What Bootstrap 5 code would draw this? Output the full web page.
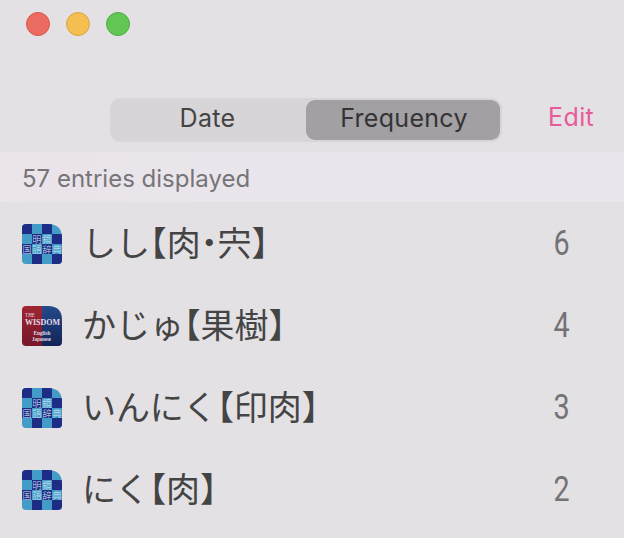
<!DOCTYPE html>
<html lang="ja">
<head>
<meta charset="utf-8">
<meta name="viewport" content="width=device-width, initial-scale=1">
<title>History</title>
<link href="https://cdn.jsdelivr.net/npm/bootstrap@5.3.0/dist/css/bootstrap.min.css" rel="stylesheet">
<style>
body{background:#e3e1e4;font-family:Inter,"Noto Sans CJK JP",sans-serif;height:538px;color:#444;overflow:hidden}
.titlebar{height:98px;padding:12px 0 0 26px;gap:16px}
.dot{width:24px;height:24px;border:1px solid}
.dot-r{background:#ec6b60;border-color:#d9574c}
.dot-y{background:#f4bf50;border-color:#dba243}
.dot-g{background:#62c655;border-color:#4dac3f}
.toolbar{height:54px;padding-left:110px}
.segments{width:392px;height:44px;border-radius:11px;background:#d7d5d8;padding:2px}
.segment{width:194px;height:40px;border-radius:9px;font-size:25px;line-height:36px;letter-spacing:.3px;color:#444;text-align:center;border:0;background:none;padding:0 0 4px}
.segment:first-child{padding-right:3px}
.segment.on{background:#a2a0a3;color:#343335;padding-left:2px}
.edit{font-size:25px;line-height:37px;color:#e85b9b;margin-left:46px;padding-top:1px;letter-spacing:.4px}
.summary{height:50px;background:linear-gradient(90deg,#ebe4ea,#e9e5eb 30%,#e9e5ec);color:#767478;font-size:24px;line-height:53px;padding-left:22px}
.entry{height:82px;padding:2px 54px 0 22px}
.word{font-family:"Noto Sans CJK JP",sans-serif;font-size:34px;line-height:50px;margin-left:20px;padding-bottom:4px;letter-spacing:-.1px}
.half{font-feature-settings:"halt"}
.count{font-family:Roboto,sans-serif;font-size:35px;line-height:40px;color:#747276;transform:scaleX(.82);transform-origin:right;padding-bottom:1px}
.ico{width:40px;height:40px;overflow:visible}
symbol{overflow:visible}
</style>
</head>
<body>
<svg class="position-absolute" width="0" height="0">
<defs>
<clipPath id="tile"><path d="M4 0H26Q40 0 40 14V36Q40 40 36 40H4Q0 40 0 36V4Q0 0 4 0Z"/></clipPath>
<linearGradient id="rd" x2="0" y2="1"><stop stop-color="#a02532"/><stop offset="1" stop-color="#75172a"/></linearGradient>
<linearGradient id="bl" x2="0" y2="1"><stop stop-color="#244a8d"/><stop offset="1" stop-color="#122455"/></linearGradient>
</defs>
<symbol id="meikyo" viewBox="0 0 40 40">
<g clip-path="url(#tile)"><path fill="#439bc8" d="M0 0h40v40H0z"/>
<path fill="#1d2d86" d="M0 0h10v10H0zM20 0h10v10H20zM10 10h10v10H10zM30 10h10v10H30zM0 20h10v10H0zM20 20h10v10H20zM10 30h10v10H10zM30 30h10v10H30z"/></g>
<g fill="#d5e3f2" font-family="Noto Sans CJK JP,sans-serif" font-size="9.4" font-weight="300"><text x="10.3" y="18.6" textLength="19.4">明鏡</text><text x=".3" y="28.6" textLength="39.4">国語辞典</text></g>
</symbol>
<symbol id="wisdom" viewBox="0 0 40 40">
<g clip-path="url(#tile)"><path fill="url(#rd)" d="M0 0h20v40H0z"/><path fill="url(#bl)" d="M20 0h20v40H20z"/></g>
<g fill="#e3dce6" font-family="Liberation Serif,serif"><text x="3" y="11" font-size="5.5" textLength="10" lengthAdjust="spacingAndGlyphs">THE</text><text x="3" y="19" font-size="8" font-weight="bold" textLength="35" lengthAdjust="spacingAndGlyphs">WISDOM</text><text x="11.5" y="28.5" font-size="5.6" font-weight="bold" textLength="17" lengthAdjust="spacingAndGlyphs">English</text><text x="10" y="34.5" font-size="5.6" font-weight="bold" textLength="19" lengthAdjust="spacingAndGlyphs">Japanese</text></g>
</symbol>
</svg>
<header class="titlebar d-flex align-items-start">
<span class="dot dot-r rounded-circle"></span><span class="dot dot-y rounded-circle"></span><span class="dot dot-g rounded-circle"></span>
</header>
<nav class="toolbar d-flex align-items-start">
<div class="segments d-flex"><button class="segment">Date</button><button class="segment on">Frequency</button></div>
<a class="edit text-decoration-none" href="#">Edit</a>
</nav>
<div class="summary">57 entries displayed</div>
<main>
<div class="entry d-flex align-items-center"><svg class="ico"><use href="#meikyo"/></svg><span class="word">しし<span class="half">【</span>肉<span class="half">・</span>宍<span class="half">】</span></span><span class="count ms-auto">6</span></div>
<div class="entry d-flex align-items-center"><svg class="ico"><use href="#wisdom"/></svg><span class="word">かじゅ<span class="half">【</span>果樹<span class="half">】</span></span><span class="count ms-auto">4</span></div>
<div class="entry d-flex align-items-center"><svg class="ico"><use href="#meikyo"/></svg><span class="word">いんにく<span class="half">【</span>印肉<span class="half">】</span></span><span class="count ms-auto">3</span></div>
<div class="entry d-flex align-items-center"><svg class="ico"><use href="#meikyo"/></svg><span class="word">にく<span class="half">【</span>肉<span class="half">】</span></span><span class="count ms-auto">2</span></div>
</main>
</body>
</html>
